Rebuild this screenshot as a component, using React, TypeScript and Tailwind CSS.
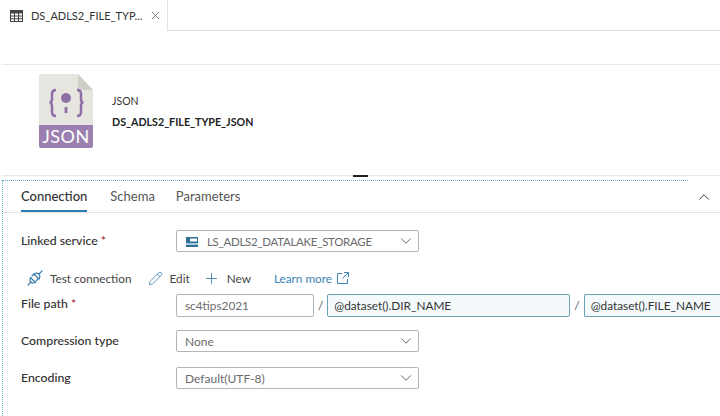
import { ChevronDown, ChevronUp, Pencil, Plus, X } from 'lucide-react'

const font = { fontFamily: 'Lato, "Noto Sans", sans-serif' }

function JsonFileIcon() {
  return (
    <svg width="54" height="74" viewBox="0 0 54 74" className="block">
      <path d="M0 1 Q0 0 1 0 H39 L54 16 V56 H0 Z" fill="#e6e5df" />
      <path d="M39 0 L54 16 H39 Z" fill="#cfcfc5" />
      <path d="M0 51 H54 V72 Q54 74 52 74 H2 Q0 74 0 72 Z" fill="#9b7fb0" />
      <path d="M17 16 Q13 16 13 20 V25 Q13 28.500 10.500 28.500 Q13 28.500 13 32 V38 Q13 42 17 42" fill="none" stroke="#8f6fa8" strokeWidth="2.500" />
      <path d="M38 16 Q42 16 42 20 V25 Q42 28.500 44.500 28.500 Q42 28.500 42 32 V38 Q42 42 38 42" fill="none" stroke="#8f6fa8" strokeWidth="2.500" />
      <circle cx="27" cy="24" r="5" fill="#8f6fa8" />
      <rect x="25.600" y="33" width="2.800" height="6" fill="#8f6fa8" />
      <text x="27" y="69" textAnchor="middle" fontSize="18" letterSpacing="0.500" fill="#ffffff" fontFamily="Lato, sans-serif">JSON</text>
    </svg>
  )
}

function TableIcon() {
  return (
    <svg width="13" height="12" viewBox="0 0 13 12" fill="none" stroke="#444444" strokeWidth="1">
      <rect x="0.500" y="0.500" width="12" height="11" />
      <rect x="0.500" y="0.500" width="12" height="2.500" fill="#444444" />
      <path d="M0.500 6 H12.500 M0.500 8.800 H12.500 M4.500 3 V11.500 M8.500 3 V11.500" />
    </svg>
  )
}

function PlugIcon() {
  return (
    <svg width="16" height="16" viewBox="0 0 16 16" fill="none" stroke="#3277a8" strokeWidth="1.100" strokeLinecap="round">
      <path d="M1 15 L4 12" />
      <path d="M15 1 L12 4" />
      <path d="M3.500 7.500 L8.500 12.500 L6.500 13 Q5 13 3.800 12.200 Q2.800 11 3 9.500 Z" />
      <path d="M7 4 L12 9 L12.800 7 Q13 5 12 4 Q10.800 3 9 3.200 Z" />
      <path d="M5 6 L7 4 M9 11 L11 9" />
    </svg>
  )
}

function LearnMoreIcon() {
  return (
    <svg width="12" height="12" viewBox="0 0 12 12" fill="none" stroke="#3b83b5" strokeWidth="1">
      <path d="M5 1.500 H0.500 V11.500 H10.500 V7" />
      <path d="M7 0.500 H11.500 V5 M11.500 0.500 L5.500 6.500" />
    </svg>
  )
}

function Select({ children }: { children: React.ReactNode }) {
  return (
    <div className="flex h-[22px] w-[243px] items-center justify-between rounded-[2px] border border-[#b5b5b5] pl-2 pr-[3px] text-[12px] text-[#6b6b6b]">
      <div className="flex items-center pt-[1px]">{children}</div>
      <ChevronDown className="h-[18px] w-[18px] text-[#555555]" strokeWidth={1.2} />
    </div>
  )
}

function Label({ children, required }: { children: string; required?: boolean }) {
  return (
    <div className="w-[155px] shrink-0 pt-[1px] text-[12.300px] font-medium text-[#2f2f2f]">
      {children}
      {required && <span className="text-[#a4262c]"> *</span>}
    </div>
  )
}

export default function App() {
  return (
    <div className="flex h-[416px] w-[720px] flex-col overflow-hidden bg-white text-[#252525]" style={font}>
      {/* tab strip */}
      <div className="flex h-[31px] shrink-0">
        <div className="flex w-[168px] items-center border-r border-[#e2e2e2] pl-[10px]">
          <TableIcon />
          <span className="ml-[8px] pt-[1px] text-[11px] text-[#333333]">DS_ADLS2_FILE_TYP...</span>
          <X className="ml-[7px] h-[13px] w-[13px] text-[#444444]" strokeWidth={1.2} />
        </div>
        <div className="flex-1 border-b border-[#e2e2e2]" />
      </div>

      {/* dataset header */}
      <div className="mt-[33px] ml-[2px] flex h-[112px] shrink-0 items-start border-y border-[#e8e8e8] pl-[37px] pt-[9px]">
        <JsonFileIcon />
        <div className="ml-[19px] mt-[20px]">
          <div className="text-[10.500px] leading-[14px] text-[#333333]">JSON</div>
          <div className="mt-[7px] text-[10.700px] font-bold leading-[14px] text-[#222222]">DS_ADLS2_FILE_TYPE_JSON</div>
        </div>
      </div>
      <div className="mx-auto -mt-[1px] h-[2px] w-[15px] shrink-0 bg-[#222222]" />

      {/* connection panel */}
      <div className="mt-[3px] ml-[2px] flex-1 border-l border-dotted border-[#5fb5c7]">
        <div className="w-[685px] border-t border-dotted border-[#5fb5c7]" />
        <div className="flex h-[32px] w-[717px] items-stretch border-b border-[#e3e3e3] pl-[18px]">
          <div className="flex items-center border-b-2 border-[#2b7cb0] pt-[2px] text-[13px] font-medium text-[#333333]">Connection</div>
          <div className="ml-[23px] flex items-center text-[13px] text-[#555555]">Schema</div>
          <div className="ml-[21px] flex items-center text-[13px] text-[#555555]">Parameters</div>
          <div className="ml-auto flex items-center pr-[7px]">
            <ChevronUp className="h-[18px] w-[18px] text-[#333333]" strokeWidth={1.3} />
          </div>
        </div>

        <div className="pl-[18px]">
          <div className="mt-[17px] flex items-center">
            <Label required>Linked service</Label>
            <Select>
              <svg width="12" height="10" viewBox="0 0 12 10" className="mr-[9px] ml-[1px]">
                <rect width="12" height="10" fill="#2f6f96" />
                <rect x="4" y="1.500" width="7" height="3" fill="#ffffff" />
                <rect y="6" width="12" height="2" fill="#a9cde0" />
              </svg>
              <span className="text-[11.500px] tracking-[-0.3px]">LS_ADLS2_DATALAKE_STORAGE</span>
            </Select>
          </div>

          <div className="mt-[16px] flex h-[20px] items-center pl-[6px] text-[11.750px] text-[#444444]">
            <PlugIcon />
            <span className="ml-[7px] pt-[1px]">Test connection</span>
            <Pencil className="ml-[16px] h-[15px] w-[15px] text-[#3277a8]" strokeWidth={1.2} />
            <span className="ml-[7px] pt-[1px]">Edit</span>
            <Plus className="ml-[13px] h-[17px] w-[17px] text-[#3277a8]" strokeWidth={1.2} />
            <span className="ml-[7px] pt-[1px]">New</span>
            <span className="ml-[23px] pt-[1px] text-[#3b83b5]">Learn more</span>
            <span className="ml-[5px]"><LearnMoreIcon /></span>
          </div>

          <div className="mt-[6px] flex items-start">
            <Label required>File path</Label>
            <div className="flex h-[23px] flex-1 items-center text-[11.800px]">
              <div className="flex h-full w-[138px] items-center rounded-[2px] border border-[#b5b5b5] pl-2 text-[#6b6b6b]">sc4tips2021</div>
              <span className="mx-[4px] text-[#555555]">/</span>
              <div className="flex h-full w-[243px] items-center rounded-[2px] border border-[#6ba3b5] bg-[#f4fafc] pl-[6px] text-[#333333]">@dataset().DIR_NAME</div>
              <span className="mx-[4px] text-[#555555]">/</span>
              <div className="flex h-full flex-1 items-center rounded-l-[2px] border border-r-0 border-[#6ba3b5] bg-[#f4fafc] pl-[6px] text-[#333333]">@dataset().FILE_NAME</div>
            </div>
          </div>

          <div className="mt-[13px] flex items-center">
            <Label>Compression type</Label>
            <Select>None</Select>
          </div>

          <div className="mt-[15px] flex items-center">
            <Label>Encoding</Label>
            <Select>Default(UTF-8)</Select>
          </div>
        </div>
      </div>
    </div>
  )
}
